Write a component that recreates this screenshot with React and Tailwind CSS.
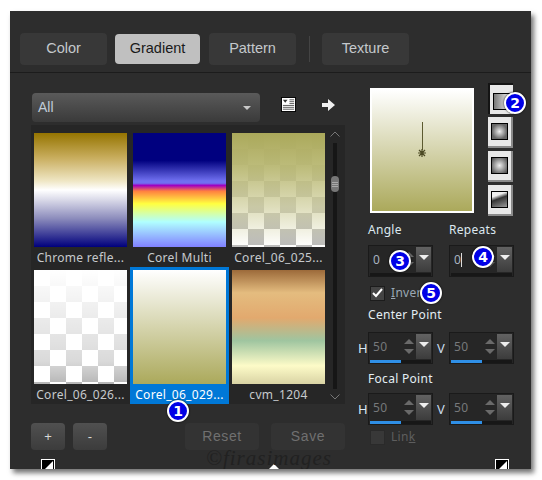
import React from 'react';

const uiFont = "font-['Noto_Sans','Open_Sans',sans-serif]";

function Tab({ label, active, className = '' }) {
  return (
    <button
      className={`h-8 rounded flex items-center justify-center font-['Liberation_Sans',Arial,sans-serif] text-[14.5px] ${
        active ? 'bg-[#c0c0c0] text-[#1a1a1a]' : 'bg-[#383838] text-[#c4c8cc]'
      } ${className}`}
    >
      {label}
    </button>
  );
}

function Badge({ n, className }) {
  return (
    <div
      className={`absolute w-[22px] h-[22px] rounded-full bg-[#0000e6] border-2 border-white shadow-[0_0_2px_#000] flex items-center justify-center text-white text-[14px] font-bold leading-none font-['DejaVu_Sans',sans-serif] ${className}`}
    >
      {n}
    </div>
  );
}

const thumbs = [
  {
    label: 'Chrome refle...',
    bg: 'bg-[linear-gradient(#957400_0%,#c9ae5f_22%,#efe6c4_42%,#ffffff_50%,#dcdcea_58%,#8c8cbc_75%,#00007c_100%)]',
  },
  {
    label: 'Corel Multi',
    bg: 'bg-[linear-gradient(#00007f_0%,#00007f_24%,#7070f0_42%,#7070f0_44%,#a000c0_46%,#ff8040_51%,#ffff40_62%,#d8ffa0_70%,#b0ffff_78%,#8080ff_100%)]',
  },
  {
    label: 'Corel_06_025...',
    bg: '[background:linear-gradient(#aba95bff,#b9b873f0_30%,#cfce9cb0_65%,#f5f5e000_100%),repeating-conic-gradient(#bcbcbc_0_25%,#ffffff_0_50%)_0_0/32px_32px]',
  },
  {
    label: 'Corel_06_026...',
    bg: '[background:linear-gradient(#ffffffff,#ffffffb0_50%,#ffffff80_80%,#ffffff08_100%),repeating-conic-gradient(#b4b4b4_0_25%,#ffffff_0_50%)_0_0/32px_32px]',
  },
  {
    label: 'Corel_06_029...',
    selected: true,
    bg: 'bg-[linear-gradient(#ffffff,#aba95b)]',
  },
  {
    label: 'cvm_1204',
    bg: 'bg-[linear-gradient(#9c6a3a_0%,#e4bc7f_20%,#e2a96e_42%,#9fc5a0_62%,#fdfbc8_84%,#d9d3a4_100%)]',
  },
];

function Thumb({ label, bg, selected }) {
  return (
    <div className={`w-[99px] h-[137px] flex flex-col items-center pt-[3px] ${selected ? 'bg-[#0078d7]' : ''}`}>
      <div className={`w-[93px] h-[114px] shrink-0 ${bg}`} />
      <div className={`mt-[2px] text-[12px] leading-[18px] whitespace-nowrap tracking-[0.3px] ${uiFont} ${selected ? 'text-white' : 'text-[#c6cacd]'}`}>
        {label}
      </div>
    </div>
  );
}

function ModeButton({ pressed, children }) {
  return (
    <div
      className={`w-[25px] h-[31px] flex items-center justify-center bg-[#e8e8e8] ${
        pressed
          ? 'border-l-2 border-t-2 border-[#141414] pt-[3px]'
          : 'border-r-2 border-b-2 border-[#8a8a8a]'
      }`}
    >
      {children}
    </div>
  );
}

function Spin({ value, cursor, dim, progress }) {
  return (
    <div className="relative w-[65px] h-[32px] bg-[#262626] border border-[#1a1a1a] p-[1px] flex">
      <div className={`flex-1 flex items-center pl-[3px] pb-[3px] text-[12px] tracking-[0.5px] ${uiFont} ${dim ? 'text-[#77797b]' : 'text-[#a8b4c0]'}`}>
        {value}
        {cursor && <span className="w-px h-[14px] bg-[#ddd]" />}
      </div>
      <div className="w-[12px] h-[25px] flex flex-col items-center justify-center gap-[5px] mr-px">
        <div className="w-0 h-0 border-x-[5px] border-x-transparent border-b-[5px] border-b-[#6a6a6a]" />
        <div className="w-0 h-0 border-x-[5px] border-x-transparent border-t-[5px] border-t-[#6a6a6a]" />
      </div>
      <div className="w-[15px] h-[25px] bg-[linear-gradient(#626262,#3c3c3c)] flex justify-center pt-[8px]">
        <div className="w-0 h-0 border-x-[5px] border-x-transparent border-t-[5px] border-t-[#eeeeee]" />
      </div>
      <div className="absolute left-[1px] right-[1px] bottom-[0px] h-[3px] bg-[#171717]">
        {progress && <div className="w-[31px] h-[3px] bg-[#2f8fe6]" />}
      </div>
    </div>
  );
}

function PointRow() {
  return (
    <div className="flex items-center w-[162px]">
      <span className={`w-[16px] pl-[6px] text-[13px] text-[#d8e8f4] ${uiFont}`}>H</span>
      <Spin value="50" dim progress />
      <span className={`w-[16px] text-center text-[13px] text-[#c8dcec] ${uiFont}`}>V</span>
      <Spin value="50" dim progress />
    </div>
  );
}

function ToggleIcon() {
  return (
    <svg width="14" height="14" viewBox="0 0 14 14">
      <rect x="0.5" y="0.5" width="13" height="13" fill="#000" stroke="#fff" />
      <path d="M2 12 L12 2 L12 12 Z" fill="#fff" />
    </svg>
  );
}

export default function App() {
  return (
    <div className="w-[542px] h-[480px] bg-white overflow-hidden pt-[11px] pl-[10px]">
      <div className="relative w-[521px] h-[458px] bg-[#2d2d2d] shadow-[3px_4px_5px_rgba(0,0,0,0.55)] overflow-hidden">
        <div className="h-[62px] pt-[22px] pl-[10px] border-b border-[#1c1c1c] flex items-start">
          <Tab label="Color" className="w-[87px]" />
          <Tab label="Gradient" active className="w-[85px] ml-[8px] h-[30px] mt-px" />
          <Tab label="Pattern" className="w-[87px] ml-[9px]" />
          <div className="w-px h-[26px] bg-[#444] ml-[13px] mt-[3px]" />
          <Tab label="Texture" className="w-[87px] ml-[12px]" />
        </div>

        <div className="flex">
          <div className="w-[314px] ml-[21px] pt-[20px] shrink-0">
            <div className="flex items-center">
              <div className="w-[228px] h-[29px] ml-px rounded bg-[linear-gradient(#5a5a5a,#3a3a3a)] flex items-center justify-between pl-[6px] pr-[9px] font-['Liberation_Sans',Arial,sans-serif] text-[14px] text-[#c0ccd8]">
                All
                <div className="w-0 h-0 border-x-[4px] border-x-transparent border-t-[4px] border-t-[#c8c8c8]" />
              </div>
              <svg className="ml-[21px] -mt-[6px]" width="15" height="15" viewBox="0 0 16 16">
                <rect x="0.5" y="0.5" width="15" height="15" fill="#fff" stroke="#000" />
                <path d="M2 3 H7 L4.5 6 Z" fill="#333" />
                <path d="M9 3 H14 M9 5 H14 M9 7 H14 M2 9 H14 M2 11 H14 M2 13 H14" stroke="#555" />
              </svg>
              <svg className="ml-[26px] -mt-[5px]" width="13" height="12" viewBox="0 0 13 12">
                <path d="M0 4 H6 V0 L13 6 L6 12 V8 H0 Z" fill="#f0f0f0" />
              </svg>
            </div>

            <div className="mt-[3px] h-[279px] bg-[#262626] pt-[5px] flex">
              <div className="grid grid-cols-[99px_99px_99px] auto-rows-[137px]">
                {thumbs.map((t) => (
                  <Thumb key={t.label} {...t} />
                ))}
              </div>
              <div className="flex-1 flex flex-col items-center -mt-[1px] pr-[3px]">
                <svg width="10" height="6" viewBox="0 0 10 6" className="mt-[2px]">
                  <path d="M0.5 5.5 L5 1 L9.5 5.5" fill="none" stroke="#777" />
                </svg>
                <div className="relative w-[4px] h-[246px] mt-[6px] bg-[#161616]">
                  <div className="absolute -left-[2px] top-[33px] w-[8px] h-[16px] bg-[#777] rounded-sm flex flex-col items-center justify-center gap-px">
                    <div className="w-[6px] h-px bg-[#aaa]" />
                    <div className="w-[6px] h-px bg-[#aaa]" />
                    <div className="w-[6px] h-px bg-[#aaa]" />
                  </div>
                </div>
                <svg width="10" height="6" viewBox="0 0 10 6" className="mt-[5px]">
                  <path d="M0.5 0.5 L5 5 L9.5 0.5" fill="none" stroke="#777" />
                </svg>
              </div>
            </div>

            <div className="flex mt-[19px] font-['Liberation_Sans',Arial,sans-serif]">
              <button className="w-[34px] h-[27px] rounded-sm bg-[linear-gradient(#505050,#3c3c3c)] text-[#d8d8d8] text-[13px] leading-none">+</button>
              <button className="w-[34px] h-[27px] ml-[8px] rounded-sm bg-[linear-gradient(#505050,#3c3c3c)] text-[#d8d8d8] text-[13px] leading-none">-</button>
              <button className="w-[74px] h-[27px] ml-[78px] rounded-sm bg-[#333333] text-[#707070] text-[14px] tracking-[0.6px]">Reset</button>
              <button className="w-[74px] h-[27px] ml-[12px] rounded-sm bg-[#333333] text-[#707070] text-[14px] tracking-[0.6px]">Save</button>
            </div>
          </div>

          <div className="flex-1 pt-[10px] pl-[23px]">
            <div className="flex">
              <div className="w-[104px] h-[125px] mt-[5px] ml-[2px] border-2 border-white bg-[linear-gradient(#ffffff,#aba95b)] flex flex-col items-center pt-[32px]">
                <div className="w-px h-[28px] bg-[#5c5a30]" />
                <svg width="8" height="8" viewBox="0 0 8 8" className="-mt-[1px]">
                  <path d="M4 0 V8 M0 4 H8 M1 1 L7 7 M7 1 L1 7" stroke="#4c4a24" strokeWidth="1.2" />
                </svg>
              </div>
              <div className="ml-[14px] flex flex-col gap-[3px]">
                <ModeButton pressed>
                  <div className="w-[17px] h-[17px] border border-black bg-[linear-gradient(90deg,#777,#eee)]" />
                </ModeButton>
                <ModeButton>
                  <div className="w-[17px] h-[17px] border border-black bg-[radial-gradient(closest-side,#eee,#666)]" />
                </ModeButton>
                <ModeButton>
                  <div className="w-[17px] h-[17px] border border-black bg-[radial-gradient(circle,#eee,#444)]" />
                </ModeButton>
                <ModeButton>
                  <div className="w-[17px] h-[17px] border border-black bg-[linear-gradient(160deg,#eee_25%,#333_45%,#999)]" />
                </ModeButton>
              </div>
            </div>

            <div className={`text-[12px] tracking-[0.3px] leading-[18px] text-[#dce8f0] ${uiFont}`}>
              <div className="flex mt-[5px]">
                <div className="w-[81px]">Angle</div>
                <div>Repeats</div>
              </div>
              <div className="flex mt-[6px]">
                <div className="w-[81px]"><Spin value="0" /></div>
                <Spin value="0" cursor />
              </div>
              <div className="flex items-center mt-[7px] ml-[2px]">
                <div className="w-[15px] h-[15px] bg-[#444] border border-[#1c1c1c] flex items-center justify-center">
                  <svg width="11" height="10" viewBox="0 0 11 10">
                    <path d="M1 5 L4 8 L10 1" fill="none" stroke="#fff" strokeWidth="2" />
                  </svg>
                </div>
                <span className="ml-[6px] text-[#9aa8b4]"><span className="underline">I</span>nvert</span>
              </div>
              <div className="mt-[4px] text-[#e4eef4]">Center Point</div>
              <div className="-ml-[16px] mt-[8px]"><PointRow /></div>
              <div className="mt-[6px] text-[#e4eef4]">Focal Point</div>
              <div className="-ml-[16px] mt-[5px]"><PointRow /></div>
              <div className="flex items-center mt-[3px] ml-[2px]">
                <div className="w-[15px] h-[15px] bg-[#383838] border border-[#2a2a2a]" />
                <span className="ml-[6px] text-[#5e5e5e]">Lin<span className="underline">k</span></span>
              </div>
            </div>
          </div>
        </div>

        <div className="absolute left-[31px] top-[448px]"><ToggleIcon /></div>
        <div className="absolute left-[485px] top-[448px]"><ToggleIcon /></div>
        <div className="absolute left-[259px] top-[453px] w-0 h-0 border-x-[5px] border-x-transparent border-b-[5px] border-b-white" />
        <div className="absolute left-[196px] top-[436px] text-[21px] leading-[22px] text-[#212121] font-['Liberation_Serif',serif] italic tracking-[1px]">©firasimages</div>

        <Badge n="1" className="left-[157px] top-[389px]" />
        <Badge n="2" className="left-[494px] top-[81px]" />
        <Badge n="3" className="left-[379px] top-[239px]" />
        <Badge n="4" className="left-[462px] top-[235px]" />
        <Badge n="5" className="left-[410px] top-[271px]" />
      </div>
    </div>
  );
}
